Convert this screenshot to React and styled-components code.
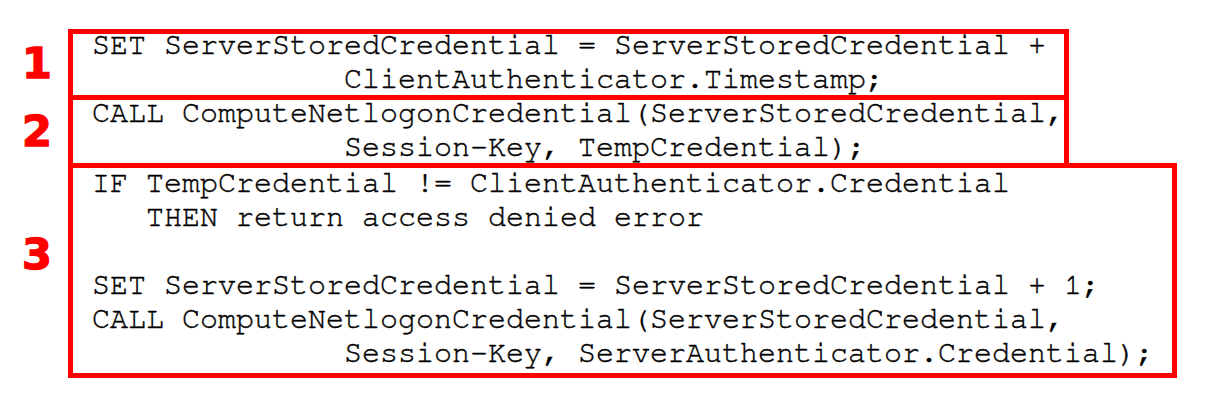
import React from 'react'
import styled, { createGlobalStyle } from 'styled-components'

const GlobalStyle = createGlobalStyle`
    html, body {
        margin: 0;
        padding: 0;
        background: #ffffff;
    }
`

//-------------------- page -----------------------//
const Page = styled.div`
    width: 1210px;
    height: 400px;
    padding-top: 29px;
    box-sizing: border-box;
    display: flex;
    flex-direction: column;
    background: #ffffff;
`

//-------------------- one numbered step -----------------------//
const Row = styled.div`
    display: flex;
    align-items: flex-start;
    & + & {
        margin-top: -5px;
    }
`

const Label = styled.div`
    width: 58px;
    margin-left: 8px;
    margin-right: 2px;
    margin-top: ${props => props.offset}px;
    font-family: "DejaVu Sans", "Liberation Sans", sans-serif;
    font-weight: 700;
    font-size: 43px;
    line-height: 1;
    text-align: center;
    color: #fe0000;
    -webkit-text-stroke: 1.4px #fe0000;
`

const Box = styled.div`
    width: ${props => props.width}px;
    height: ${props => props.height}px;
    box-sizing: border-box;
    border: 5px solid #fe0000;
    padding-left: 19px;
`

const Code = styled.pre`
    margin: ${props => props.shift}px 0 0 0;
    font-family: "Nimbus Mono PS", "Nimbus Mono L", "FreeMono", "Courier 10 Pitch", "Liberation Mono", monospace;
    font-size: 30px;
    line-height: 34px;
    color: #000000;
    -webkit-text-stroke: 0.4px #000000;
    white-space: pre;
`

const steps = [
  {
    id: 1,
    offset: 13,
    width: 1001,
    height: 71,
    shift: -6,
    code: 'SET ServerStoredCredential = ServerStoredCredential +\n              ClientAuthenticator.Timestamp;',
  },
  {
    id: 2,
    offset: 15,
    width: 1001,
    height: 73,
    shift: -4,
    code: 'CALL ComputeNetlogonCredential(ServerStoredCredential,\n              Session-Key, TempCredential);',
  },
  {
    id: 3,
    offset: 70,
    width: 1109,
    height: 215,
    shift: -2,
    code:
      'IF TempCredential != ClientAuthenticator.Credential\n' +
      '   THEN return access denied error\n' +
      '\n' +
      'SET ServerStoredCredential = ServerStoredCredential + 1;\n' +
      'CALL ComputeNetlogonCredential(ServerStoredCredential,\n' +
      '              Session-Key, ServerAuthenticator.Credential);',
  },
]

const App = () => {
  return (
    <Page>
      <GlobalStyle />
      {steps.map((step) => (
        <Row key={step.id}>
          <Label offset={step.offset}>{step.id}</Label>
          <Box width={step.width} height={step.height}>
            <Code shift={step.shift}>{step.code}</Code>
          </Box>
        </Row>
      ))}
    </Page>
  )
}

export default App
